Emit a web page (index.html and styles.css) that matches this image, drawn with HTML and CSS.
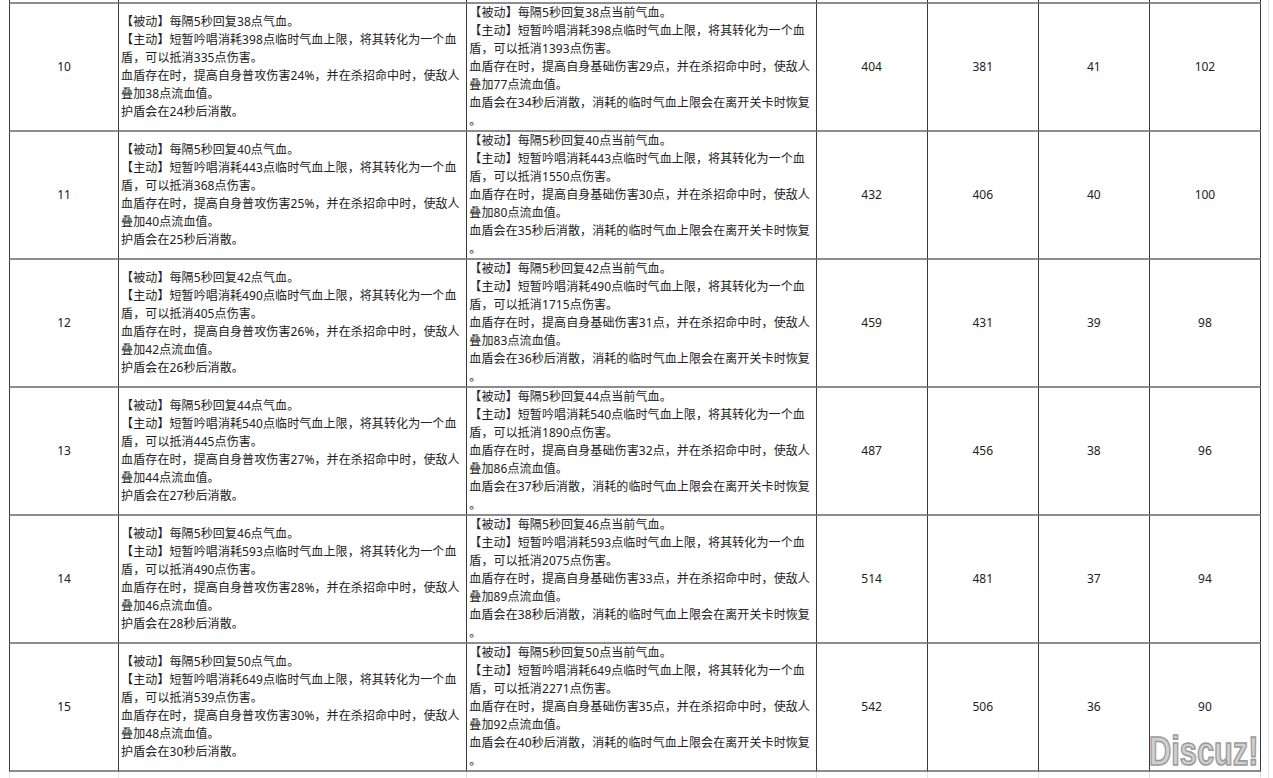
FILE: index.html
```html
<!DOCTYPE html>
<html lang="zh-CN">
<head>
<meta charset="utf-8">
<title>技能数值表</title>
<link rel="stylesheet" href="styles.css">
</head>
<body>
<div class="page">
<table class="grid">
<colgroup>
<col class="c-lv"><col class="c-txt"><col class="c-txt2"><col class="c-num"><col class="c-num"><col class="c-num"><col class="c-num">
</colgroup>
<tbody>
<tr class="stub-top"><td></td><td></td><td></td><td></td><td></td><td></td><td></td></tr>

<tr>
<td class="num">10</td>
<td class="txt">【被动】每隔5秒回复38点气血。<br>【主动】短暂吟唱消耗398点临时气血上限，将其转化为一个血<br>盾，可以抵消335点伤害。<br>血盾存在时，提高自身普攻伤害24%，并在杀招命中时，使敌人<br>叠加38点流血值。<br>护盾会在24秒后消散。</td>
<td class="txt">【被动】每隔5秒回复38点当前气血。<br>【主动】短暂吟唱消耗398点临时气血上限，将其转化为一个血<br>盾，可以抵消1393点伤害。<br>血盾存在时，提高自身基础伤害29点，并在杀招命中时，使敌人<br>叠加77点流血值。<br>血盾会在34秒后消散，消耗的临时气血上限会在离开关卡时恢复<br>。</td>
<td class="num">404</td><td class="num">381</td><td class="num">41</td><td class="num">102</td>
</tr>

<tr>
<td class="num">11</td>
<td class="txt">【被动】每隔5秒回复40点气血。<br>【主动】短暂吟唱消耗443点临时气血上限，将其转化为一个血<br>盾，可以抵消368点伤害。<br>血盾存在时，提高自身普攻伤害25%，并在杀招命中时，使敌人<br>叠加40点流血值。<br>护盾会在25秒后消散。</td>
<td class="txt">【被动】每隔5秒回复40点当前气血。<br>【主动】短暂吟唱消耗443点临时气血上限，将其转化为一个血<br>盾，可以抵消1550点伤害。<br>血盾存在时，提高自身基础伤害30点，并在杀招命中时，使敌人<br>叠加80点流血值。<br>血盾会在35秒后消散，消耗的临时气血上限会在离开关卡时恢复<br>。</td>
<td class="num">432</td><td class="num">406</td><td class="num">40</td><td class="num">100</td>
</tr>

<tr>
<td class="num">12</td>
<td class="txt">【被动】每隔5秒回复42点气血。<br>【主动】短暂吟唱消耗490点临时气血上限，将其转化为一个血<br>盾，可以抵消405点伤害。<br>血盾存在时，提高自身普攻伤害26%，并在杀招命中时，使敌人<br>叠加42点流血值。<br>护盾会在26秒后消散。</td>
<td class="txt">【被动】每隔5秒回复42点当前气血。<br>【主动】短暂吟唱消耗490点临时气血上限，将其转化为一个血<br>盾，可以抵消1715点伤害。<br>血盾存在时，提高自身基础伤害31点，并在杀招命中时，使敌人<br>叠加83点流血值。<br>血盾会在36秒后消散，消耗的临时气血上限会在离开关卡时恢复<br>。</td>
<td class="num">459</td><td class="num">431</td><td class="num">39</td><td class="num">98</td>
</tr>

<tr>
<td class="num">13</td>
<td class="txt">【被动】每隔5秒回复44点气血。<br>【主动】短暂吟唱消耗540点临时气血上限，将其转化为一个血<br>盾，可以抵消445点伤害。<br>血盾存在时，提高自身普攻伤害27%，并在杀招命中时，使敌人<br>叠加44点流血值。<br>护盾会在27秒后消散。</td>
<td class="txt">【被动】每隔5秒回复44点当前气血。<br>【主动】短暂吟唱消耗540点临时气血上限，将其转化为一个血<br>盾，可以抵消1890点伤害。<br>血盾存在时，提高自身基础伤害32点，并在杀招命中时，使敌人<br>叠加86点流血值。<br>血盾会在37秒后消散，消耗的临时气血上限会在离开关卡时恢复<br>。</td>
<td class="num">487</td><td class="num">456</td><td class="num">38</td><td class="num">96</td>
</tr>

<tr>
<td class="num">14</td>
<td class="txt">【被动】每隔5秒回复46点气血。<br>【主动】短暂吟唱消耗593点临时气血上限，将其转化为一个血<br>盾，可以抵消490点伤害。<br>血盾存在时，提高自身普攻伤害28%，并在杀招命中时，使敌人<br>叠加46点流血值。<br>护盾会在28秒后消散。</td>
<td class="txt">【被动】每隔5秒回复46点当前气血。<br>【主动】短暂吟唱消耗593点临时气血上限，将其转化为一个血<br>盾，可以抵消2075点伤害。<br>血盾存在时，提高自身基础伤害33点，并在杀招命中时，使敌人<br>叠加89点流血值。<br>血盾会在38秒后消散，消耗的临时气血上限会在离开关卡时恢复<br>。</td>
<td class="num">514</td><td class="num">481</td><td class="num">37</td><td class="num">94</td>
</tr>

<tr>
<td class="num">15</td>
<td class="txt">【被动】每隔5秒回复50点气血。<br>【主动】短暂吟唱消耗649点临时气血上限，将其转化为一个血<br>盾，可以抵消539点伤害。<br>血盾存在时，提高自身普攻伤害30%，并在杀招命中时，使敌人<br>叠加48点流血值。<br>护盾会在30秒后消散。</td>
<td class="txt">【被动】每隔5秒回复50点当前气血。<br>【主动】短暂吟唱消耗649点临时气血上限，将其转化为一个血<br>盾，可以抵消2271点伤害。<br>血盾存在时，提高自身基础伤害35点，并在杀招命中时，使敌人<br>叠加92点流血值。<br>血盾会在40秒后消散，消耗的临时气血上限会在离开关卡时恢复<br>。</td>
<td class="num">542</td><td class="num">506</td><td class="num">36</td><td class="num">90</td>
</tr>

<tr class="stub-bottom"><td></td><td></td><td></td><td></td><td></td><td></td><td></td></tr>
</tbody>
</table>
<div class="watermark">Discuz!</div>
</div>
</body>
</html>
```

FILE: styles.css
```css
html, body {
  margin: 0;
  padding: 0;
  background: #ffffff;
  overflow: hidden;
}

.page {
  position: relative;
  width: 1259px;
  height: 778px;
  padding-left: 9px;
  border-right: 1px solid #e4e4e4;
  font-family: "Noto Sans", "Noto Sans CJK SC", sans-serif;
  font-size: 12px;
  color: #222222;
}

.grid {
  border-collapse: separate;
  border-spacing: 0;
  table-layout: fixed;
  width: 1252px;
}

.c-lv { width: 110px; }
.c-txt { width: 348px; }
.c-txt2 { width: 349px; }
.c-num { width: 111px; }

.grid td {
  border-right: 1px solid #3a3a3a;
  border-bottom: 2px solid #8d8d8d;
  height: 126px;
  padding: 0;
  vertical-align: middle;
  line-height: 18px;
}

.grid td:first-child {
  border-left: 1px solid #3a3a3a;
}

.grid .num {
  text-align: center;
}

.grid .txt {
  padding-left: 2px;
  white-space: nowrap;
  overflow: hidden;
  letter-spacing: 0.1px;
}

.grid .stub-top td {
  height: 2px;
}

.grid .stub-bottom td {
  height: 10px;
  border-bottom: none;
  border-right-color: #e2e2e2;
}

.grid .stub-bottom td:first-child {
  border-left-color: #e2e2e2;
}

.watermark {
  position: absolute;
  left: 1149px;
  top: 731px;
  font-family: "Liberation Sans", Arial, sans-serif;
  font-weight: bold;
  font-size: 40px;
  line-height: 40px;
  color: #d0d0d0;
  -webkit-text-stroke: 1.6px #9a9a9a;
  transform: scaleX(0.77);
  transform-origin: left top;
}
```
